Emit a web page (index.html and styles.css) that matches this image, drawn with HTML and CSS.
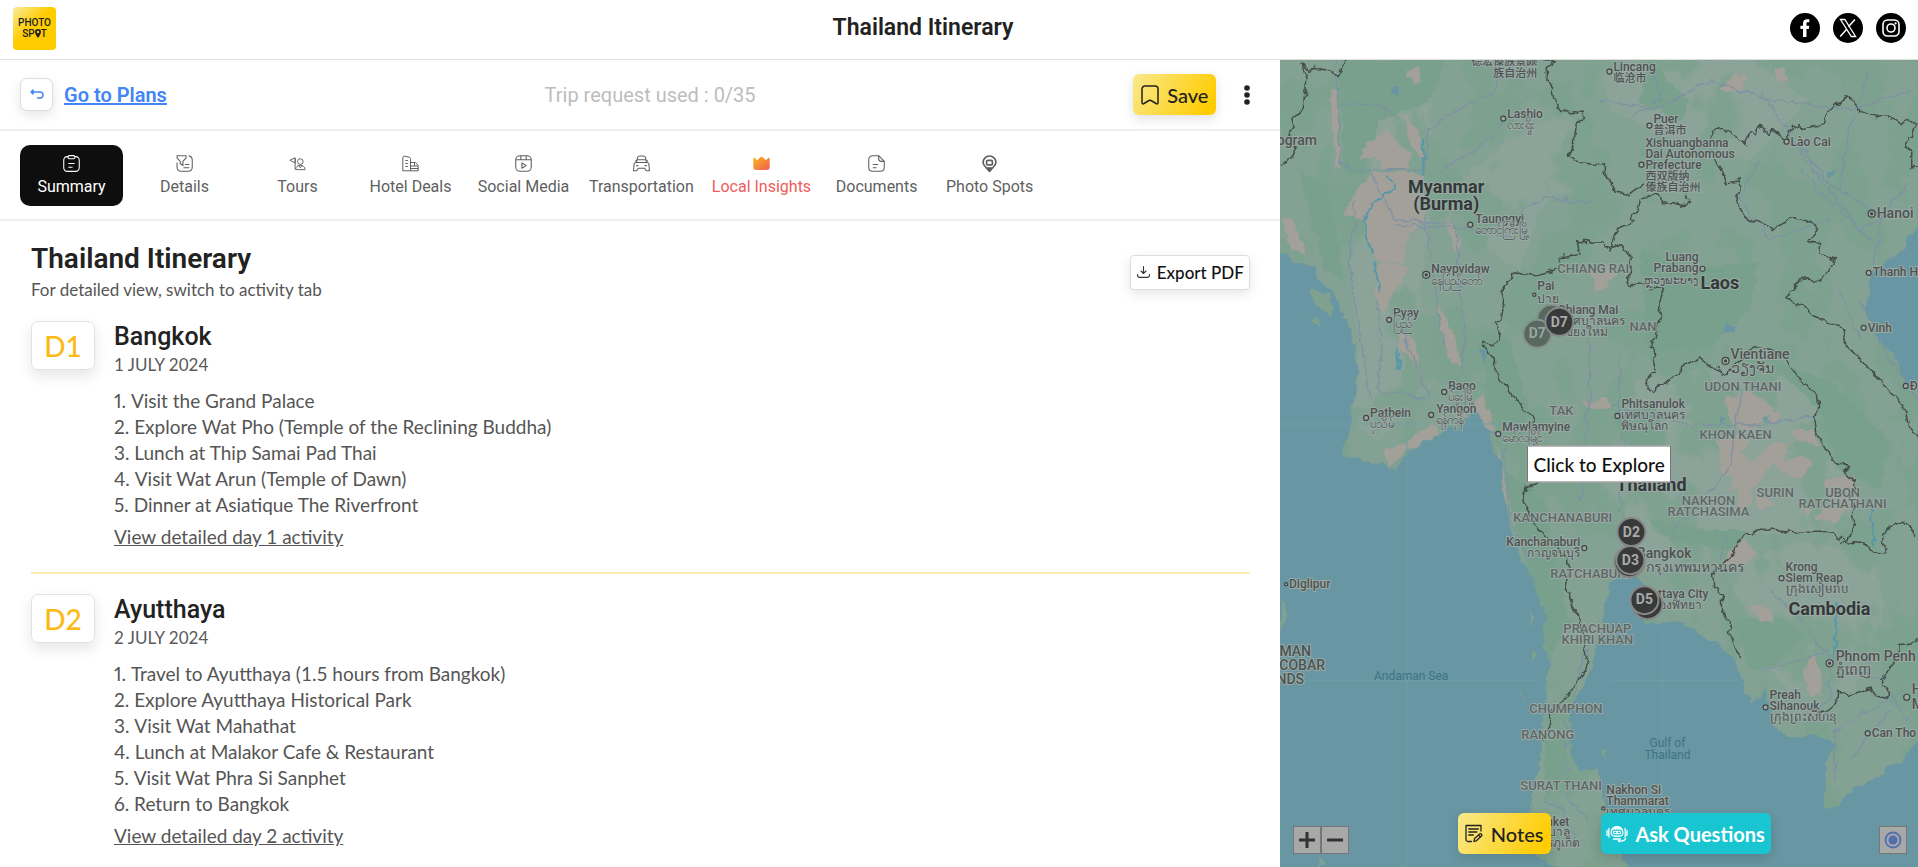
FILE: index.html
```html
<!DOCTYPE html>
<html lang="en">
<head>
<meta charset="utf-8">
<title>Thailand Itinerary</title>
<link rel="stylesheet" href="styles.css">
</head>
<body>
<div class="app">
  <header class="header">
    <a class="logo" href="#" aria-label="Photo Spot">
      <span>PHOTO</span>
      <span class="logo-line">SP<svg width="6" height="9" viewBox="0 0 6 9"><path d="M3 0a3 3 0 0 0-3 3c0 2 3 6 3 6s3-4 3-6a3 3 0 0 0-3-3z" fill="#222"/><circle cx="3" cy="3" r="1.2" fill="#fc0"/></svg>T</span>
    </a>
    <h1 class="page-title">Thailand Itinerary</h1>
    <nav class="socials" aria-label="Social links">
      <a href="#" aria-label="Facebook"><svg viewBox="0 0 30 30"><circle cx="15" cy="15" r="15"/><path d="M13 24v-8h-2.600v-3.200H13v-2.300C13 7.600 14.600 6.300 17 6.300h2.300v3h-1.500c-1 0-1.300.5-1.300 1.300v2.200h2.700l-.4 3.200h-2.300v8z" fill="#fff"/></svg></a>
      <a href="#" aria-label="X"><svg viewBox="0 0 30 30"><circle cx="15" cy="15" r="15"/><path d="M7.500 6.500h4.300l10.800 17h-4.300z" fill="none" stroke="#fff" stroke-width="1.300"/><path d="M22 6.500l-6.600 7.300M13.700 16.300L7.200 23.500" stroke="#fff" stroke-width="1.500"/></svg></a>
      <a href="#" aria-label="Instagram"><svg viewBox="0 0 30 30"><circle cx="15" cy="15" r="15"/><g fill="none" stroke="#fff" stroke-width="1.600"><rect x="7" y="7" width="16" height="16" rx="4.500"/><circle cx="15" cy="15" r="4"/></g><circle cx="19.600" cy="10.400" r="1.100" fill="#fff"/></svg></a>
    </nav>
  </header>

  <main class="main">
    <section class="plan">
      <div class="toolbar">
        <div class="back">
          <button class="back-button" aria-label="Back"><svg width="14" height="11" viewBox="0 0 14 11" fill="none" stroke="#4285f4" stroke-width="1.400" stroke-linecap="round" stroke-linejoin="round"><path d="M1.500 3H10a3 3 0 0 1 0 6H7.500"/><path d="M3 1L1 3l2 2z" fill="#4285f4"/></svg></button>
          <a class="back-link" href="#">Go to Plans</a>
        </div>
        <p class="quota">Trip request used : 0/35</p>
        <div class="actions">
          <button class="gold-button save"><svg width="18" height="20" viewBox="0 0 18 20" fill="none" stroke="#222" stroke-width="1.500" stroke-linejoin="round"><path d="M1 17.500V4a3 3 0 0 1 3-3h10a3 3 0 0 1 3 3v13.500c0 1.500-1 1.800-2 1l-5-3c-.7-.4-1.300-.4-2 0l-5 3c-1 .8-2 .5-2-1z"/></svg>Save</button>
          <button class="more" aria-label="More options"><svg width="6" height="20" viewBox="0 0 6 20" fill="#222"><circle cx="3" cy="3" r="2.800"/><circle cx="3" cy="10" r="2.800"/><circle cx="3" cy="17" r="2.800"/></svg></button>
        </div>
      </div>

      <nav class="tabs" aria-label="Plan sections">
        <a class="tab active" href="#"><svg viewBox="0 0 16 16"><path d="M5 1.500H4A3.300 3.300 0 0 0 .7 5v7A3.300 3.300 0 0 0 4 15.400h8a3.300 3.300 0 0 0 3.300-3.300V5A3.300 3.300 0 0 0 12 1.500h-1"/><rect x="4.700" y=".6" width="6.600" height="3" rx="1.500"/><path d="M5 8h6M5 11.500h4"/></svg>Summary</a>
        <a class="tab" href="#"><svg viewBox="0 0 16 16"><path d="M1 .7h8.500v2L6.500 6v4L4 8V6L1 2.700zM12 .8c2 .3 3.300 1.700 3.300 4v6.500c0 2.600-1.400 4-4 4H5c-2.600 0-4-1.400-4-4V7M8.500 9h4M7 12h5.500"/></svg>Details</a>
        <a class="tab" href="#"><svg viewBox="0 0 18 16"><path d="M6.500 2L1 4.500l5.500 3zM6.500 2v12"/><circle cx="12" cy="6" r="3"/><path d="M7 14.500c0-6 10-6 10 0zM10 10l2 2.500 2-2.500"/></svg>Tours</a>
        <a class="tab" href="#"><svg viewBox="0 0 17 16"><path d="M8.500 15.300H.8V2.500C.8 1 1.700.5 3 .7l4 1C8.200 2 8.500 2.700 8.500 4zM3.300 5h2.500M3.300 8h2.500M3.300 11h2.500M8.500 7h5l2.700 3v5.300H8.500M9 10.500h7M9 13h7M12.500 7v3.500"/></svg>Hotel Deals</a>
        <a class="tab" href="#"><svg viewBox="0 0 16 16"><rect x=".7" y=".7" width="14.600" height="14.600" rx="4"/><path d="M.7 4.500h14.600M5.500.7v3.800M10.500.7v3.800M6.500 7.500v5l4-2.500z"/></svg>Social Media</a>
        <a class="tab" href="#"><svg viewBox="0 0 16 16"><path d="M3.300 7l.9-4.500C4.500 1.300 5.200 1 6.500 1h3c1.300 0 2 .3 2.300 1.500l.9 4.500M2 5.500h1.500M12.500 5.500H14M4 4.500h8M2.500 7h11c1 0 1.500 1 1.500 2l.5 5.800h-3L11 12.500H5l-1.500 2.300h-3L1 9c0-1 .5-2 1.500-2zM3 10h2M11 10h2"/></svg>Transportation</a>
        <a class="tab insight" href="#"><svg viewBox="0 0 16 16"><defs><linearGradient id="crown" x1="0" y1="0" x2="1" y2="1"><stop offset="0" stop-color="#fdb913"/><stop offset="1" stop-color="#ef5b5b"/></linearGradient></defs><path d="M.3 3.500c0-1 1-1.200 1.600-.5L4 5l2.500-2.700c1-1 2-1 3 0L12 5l2.100-2c.6-.7 1.600-.5 1.600.5V11c0 2-1 3-3 3H3.300c-2 0-3-1-3-3z" fill="url(#crown)" stroke="none"/></svg>Local Insights</a>
        <a class="tab" href="#"><svg viewBox="0 0 16 16"><path d="M10 .7H4.500C2 .7.700 2 .7 4.500v7c0 2.500 1.300 3.800 3.800 3.800h7c2.500 0 3.800-1.300 3.800-3.800V6zM10 .7V3.500C10 5.200 10.800 6 12.500 6h2.800M4.500 9h5M4.500 12h3.500"/></svg>Documents</a>
        <a class="tab" href="#"><svg viewBox="0 0 16 16"><path d="M8 1a6 6 0 0 0-6 6c0 3 3.500 5 6 8.500 2.500-3.500 6-5.500 6-8.500a6 6 0 0 0-6-6z" stroke-width="1.500"/><path d="M5 12h6l-3 3.500z" fill="#5f5f5f"/><rect x="5.300" y="5" width="5.400" height="4.300" rx="1" stroke-width="1.600"/></svg>Photo Spots</a>
      </nav>

      <div class="content">
        <div class="content-head">
          <div>
            <h2 class="content-title">Thailand Itinerary</h2>
            <p class="hint">For detailed view, switch to activity tab</p>
          </div>
          <button class="export"><svg width="13" height="12" viewBox="0 0 13 12" fill="none" stroke="#333" stroke-width="1.100" stroke-linecap="round" stroke-linejoin="round"><path d="M6.500.6v6.600M4 5l2.500 2.500L9 5M.6 8.500v1c0 1.200.8 1.900 2 1.900h7.800c1.200 0 2-.7 2-1.900v-1"/></svg>Export PDF</button>
        </div>

        <article class="day">
          <div class="day-badge">D1</div>
          <div class="day-body">
            <h3 class="day-city">Bangkok</h3>
            <p class="day-date">1 JULY 2024</p>
            <ol class="day-list">
              <li>Visit the Grand Palace</li>
              <li>Explore Wat Pho (Temple of the Reclining Buddha)</li>
              <li>Lunch at Thip Samai Pad Thai</li>
              <li>Visit Wat Arun (Temple of Dawn)</li>
              <li>Dinner at Asiatique The Riverfront</li>
            </ol>
            <a class="day-link" href="#">View detailed day 1 activity</a>
          </div>
        </article>
        <article class="day">
          <div class="day-badge">D2</div>
          <div class="day-body">
            <h3 class="day-city">Ayutthaya</h3>
            <p class="day-date">2 JULY 2024</p>
            <ol class="day-list">
              <li>Travel to Ayutthaya (1.5 hours from Bangkok)</li>
              <li>Explore Ayutthaya Historical Park</li>
              <li>Visit Wat Mahathat</li>
              <li>Lunch at Malakor Cafe &amp; Restaurant</li>
              <li>Visit Wat Phra Si Sanphet</li>
              <li>Return to Bangkok</li>
            </ol>
            <a class="day-link" href="#">View detailed day 2 activity</a>
          </div>
        </article>
      </div>
    </section>

    <section class="map" aria-label="Map of Thailand">
      <svg class="map-canvas" viewBox="1281 60 637 807" preserveAspectRatio="xMidYMid slice">
        <defs>
          <filter id="rough" color-interpolation-filters="sRGB" filterUnits="userSpaceOnUse" x="1260" y="40" width="680" height="850"><feTurbulence type="fractalNoise" baseFrequency=".09" numOctaves="3" seed="4"/><feDisplacementMap in="SourceGraphic" scale="9" xChannelSelector="R" yChannelSelector="G"/></filter>
          <filter id="forest" color-interpolation-filters="sRGB" filterUnits="userSpaceOnUse" x="1281" y="60" width="637" height="807"><feTurbulence type="fractalNoise" baseFrequency=".018 .013" numOctaves="4" seed="11"/><feColorMatrix values="0 0 0 0 .47  0 0 0 0 .63  0 0 0 0 .55  14 0 0 0 -7"/><feComposite in2="SourceGraphic" operator="in"/></filter>
        </defs>
        <rect x="1281" y="60" width="637" height="807" fill="#84a294"/>
        <g filter="url(#rough)">
          <g fill="#8ba398">
            <path d="M1610 400L1640 380 1690 370 1730 365 1770 370 1815 390 1820 440 1850 460 1860 500 1850 530 1740 535 1720 560 1650 570 1620 540 1600 480z"/>
            <path d="M1375 60h60l-5 60 10 50-20 120 20 90-60 60-30-20 10-70-10-80 20-60z"/>
            <path d="M1460 180l50-40 60-30 30 60-60 40-20 60-30-20z"/>
            <path d="M1745 560l60-20 70 20 10 50-30 80-60 10-30-40-40-40z"/>
            <path d="M1600 60h150l60 40-60 60-80-20-60-30z"/>
          </g>
          <rect x="1281" y="60" width="637" height="807" filter="url(#forest)" opacity=".6"/>
          <g fill="#78a08d">
            <path d="M1340 62h105l-15 40-50 20-15 50-20 5z"/>
            <path d="M1300 170l30 20 15 90-20-10z"/>
            <path d="M1480 330l30 10 20 70-10 40-30-40z"/>
            <path d="M1505 470l40 30 10 60 15 60-20 40-10-60-20-60z"/>
            <path d="M1650 62l40 40-10 20-40-20z"/>
            <path d="M1640 250l60 20 60-10-10 50-40 40-60 0z"/>
            <path d="M1770 360l60 20 60 60-10 50-40-20-20-60z"/>
            <path d="M1735 620l40-5 30 20-30 30-25 5z"/>
            <path d="M1650 520l60 10 40 0-20 20-60-10z"/>
            <path d="M1545 740l20-10 0 50-20 20z"/>
            <path d="M1615 420l40-20 10 40-30 20z"/>
          </g>
          <g fill="#a39f99">
            <path d="M1332 90l6 3 0 40 4 35-6-4-4-50z"/>
            <path d="M1408 72l12-4 1 14-8 2z"/>
            <path d="M1404 115l14 13 8 36-14-16z"/>
            <path d="M1368 143l20-13 12 15 14 10-6 16-22-2-10-12-14 2z"/>
            <path d="M1358 190l20-18 28 0 20 4 0 44-16 14-6 30-28-4-12-40-20-4z"/>
            <path d="M1380 262l28 4-8 18-16 30-8-20z"/>
            <path d="M1283 220l10 0 14 34-14-4z"/>
            <path d="M1437 300l10 20 12 24 4 22-12-2-8-34z"/>
            <path d="M1450 215l12 30-5 8-8-20z"/>
            <path d="M1400 330l14 10 4 18 4 26-6-20-16-16z"/>
            <path d="M1385 450l20-8 30-20 5 12-30 16-20 16z"/>
            <path d="M1440 415l30-10 14-10 12 36-14 0-16-14z"/>
            <path d="M1498 445l6 20 4 40-6-14z"/>
            <path d="M1727 400l18-10 20 10 16 15-4 8-14-6-8 12-14 2-14-14z"/>
            <path d="M1716 440l24-5 10 8-10 8 14 10 20-20 16 4-6 14 20-4 8 10-10 14-20-4-8-12-25 30-20-4 8-12-14-4z"/>
            <path d="M1790 430l25 0 5 15-20-4zM1825 480l30-5 0 24-20 24-20-4 12-14zM1740 490l14 4-8 18-10-4zM1756 500l12-4 4 10-12 4zM1800 505l14 4-8 10z"/>
            <path d="M1730 550l14-10 14 14-20 14-14-4zM1750 604l20 4 5 14-14-2z"/>
            <path d="M1805 670l10-18 5 22 5 10-12 14-6-8z"/>
            <path d="M1720 90l14-14 12 0-2 12-16 8zM1776 70l8-4 5 16-12 0z"/>
            <path d="M1590 265l18 0 10 10-20 18zM1585 402l24-4 0 10-20 0z"/>
          </g>
          <g fill="none" stroke="#7c90a4" stroke-width="1.200">
            <path d="M1336 60l4 100 10 10 50 0 25 0 5-40 20-15 40-20 10-15 0-20"/>
            <path d="M1440 172l40-24 30-30M1370 170l26 50 60 5 10 120-10 60 40 30M1356 200l-5 70 20 130"/>
            <path d="M1378 300l5 50-5 40 50 10M1400 320l30 80M1425 215l20 130M1515 218l30-20 50 5"/>
            <path d="M1340 105l40 0 20 14M1515 240l-30-10-90-5"/>
            <path d="M1600 100l60 10 50-30 60 20 80 10 60-20M1760 90l20 30 40 60 50 60M1650 60l10 40-30 20M1870 70l-20 60-10 60"/>
            <path d="M1800 145l30 40 50 30 30-30M1800 170l60 60 40-20M1885 215l-10 40-5 40M1760 160l-20 40 30 40 60-20"/>
            <path d="M1620 350l0 60 5 40-5 60 20 30M1740 385l0 20-10 60-30 40-30 30M1610 405l80 20 70 0 60-10"/>
            <path d="M1860 300l30 60 28 40M1840 290l20 50M1590 340l0 60-10 100"/>
            <path d="M1505 440l5 80 20 40M1570 730l10-60 20-50M1545 800l20 10 10 30M1565 720l4 80 20 20"/>
            <path d="M1770 590l40 40 20 30 0 40-30 20M1830 660l50 20 30 40M1760 670l40-10 30-10M1835 780l0-50 70-40M1850 760l40-50M1720 560l10-30"/>
          </g>
          <g fill="none" stroke="#5598aa" stroke-width="2">
            <path d="M1387 175l8 14-22 15-8 18 8 32M1424 140l0 35M1398 348l2 24M1870 500l4 45M1838 600l-4 60M1375 262l6 30"/>
          </g>
          <g fill="#6896a3">
            <path d="M1270 250l17 2 5 11 11 2 14 2 1 13 9 7 8 6 17 40 6 30 0 24-6 26-5 27-4 15 17 5 17 5 20 3 13-15 13-11 17-7 7-5 15-3 13-20 5 13 12 12 0 10 5 15 6 6 1 30 4 24 10 36 12 17 10 27 7 20-4 23 9 24-5 20 1 23-6 17 1 26-8 34-3 20-5 13 0 20 13 20 37 20 10 20-317 10z"/>
            <path d="M1635 875l-10-15-20-50 0-20-7-23-18 3-8-16-4-17 2-27 12-20 11-26 7-24 5-30 5-26 12-9 16 1 8 8-2 40 36-3 20 13 20 10 10 7 7 16 7 14 5 20 11-2 4-12 5 17 5 20 13 13 27-3 23 10-10 10-2 30-1 17 0 6 13-1 17-19 30-13 3-8 13-2 4-7 25-25v150z"/>
            <path d="M1930 215l-24 25-3 12-15 8-17 17-1 13-5 20 10 23 23 27 5 17 27 24z"/>
            <path d="M1391 91l10-4-2 10-8-2zM1480 348l8 4-4 12zM1726 320l10 12-14 2zM1825 168l10 3-4 8zM1720 415l6 6-6 2zM1762 416l8-2-4 8z"/>
          </g>
          <g fill="#7fa290">
            <path d="M1309 290l22 5 4 20-12-4zM1311 318l10 0-2 8zM1529 610l6 6-4 12zM1534 650l6 4-8 8zM1520 690l8 12-6-6zM1281 600l6 10-2 20-4-2zM1603 746l5 3-4 10zM1710 635l6 6zM1320 855l8 8-8 2z"/>
          </g>
          <g fill="none" stroke="#444d4b" stroke-width="1.500" stroke-linejoin="round">
            <path d="M1345 60l-2 12-3 3-10-5-12-2-8 3-7-8 4 12-1 15-2 20-7 6-4 1 2 11-4 7 6 13-4 10-5 2-5 7"/>
            <path d="M1540 60l17 1-10 7 0 9 6 10 4 20 13 5 15 1 0 7-8 3-2 20-7 14 12 5 20 2 5 0 0 10 8 9 0 8 18 3 14-10"/>
            <path d="M1711 138l7-11 13 6 14 11 5-11 7 2 1-8 7 1 3 8 4-8 15 14 3-14 9-3 6 5 7-4 13-3 4-13 10-7 10-6 13 15 14 6 10-1 16 7 5-4 10 5-3 10-7 2-1 10 6 6 0 14 7 0"/>
            <path d="M1712 150l16 32 14-2-6 22 9 15 17 8 14 5 5-8 14-5 18 6 5 8-10 11 13 2-1 9 15 6-5 13-10 9-13-2-12 2 0 10-8 7 15 9 20 13 20 7 3 3-1 12 11 11 14 15 10 12 16 17 12 13 3 18 7 8 6-6"/>
            <path d="M1658 193l3 9 14 1 11 3 4-5-5-8M1658 193l-18 7-2 10-8 8 6 3-18 9-5 13-1 8-8-9-26 1 3 12-21 2 0 12-24 6-21-3-2 7-8 5 0 20-3 15-4 5 3 15-11 5-7-2 7 12 6 5 1 15 10 13 16 22 12 12-2 12 4 10 2 20 10 7M1611 250l10-5 11 12-3 20 3 9 14-1 18 5-6 20 5 6-6 11-1 11-5 9 5 8-2 17-7 8 0 7 7 4 17-11 11-12 7-6 10-5 10 9 12 2 2 8 26-23 3-4 14 1 13 5 5 0 8 13 14 18 12 9 1 12-3 10 2 16 8 17 7 10 15 5-2 8 10 7 0 10-5 7 4 23-4 13-4 7-9 5"/>
            <path d="M1843 535l-5 3-5-6-15-1-17 2-13-2-15-2-25 5-10 8-2 10-10 10-12 12 0 12 8 8 0 15 10 18-2 8 7 14 2 10M1843 535l8 7 17 3 7 7 9 1 3-6-6-5 0-7 10-7 12-6 15 13"/>
            <path d="M1918 638l-6 6-14 0 1 14-19 24 8 6-1 10-12-4-5-6-20 7-12-2-1 10-9 8-12 0"/>
            <path d="M1542 483l-17 7 0 13 5 10 10 17 17 13 11 17 2 17-4 12 6 17 8 8 6 40 5 7-9 12-12 22-18 16-7 28"/>
          </g>
        </g>
        <path d="M1281 424h260M1408 440v427M1281 680h260M1663 630v210M1610 680h130" stroke="#729fa4" fill="none"/>

        <g class="dots">
          <circle cx="1504" cy="119" r="2.500"/><circle cx="1471" cy="225" r="2.500"/><circle cx="1610" cy="72" r="2.500"/><circle cx="1650" cy="126" r="2.500"/><circle cx="1642" cy="165" r="2.500"/><circle cx="1787" cy="142" r="2.500"/><circle cx="1703" cy="269" r="2.500"/><circle cx="1869" cy="273" r="2.500"/><circle cx="1390" cy="320" r="2.500"/><circle cx="1445" cy="392" r="2.500"/><circle cx="1432" cy="415" r="2.500"/><circle cx="1367" cy="418" r="2.500"/><circle cx="1499" cy="434" r="2.500"/><circle cx="1585" cy="548" r="2.500"/><circle cx="1535" cy="295" r="1.600"/><circle cx="1618" cy="416" r="2.500"/><circle cx="1864" cy="328" r="2.500"/><circle cx="1906" cy="386" r="2.500"/><circle cx="1782" cy="578" r="2.500"/><circle cx="1766" cy="707" r="2.500"/><circle cx="1868" cy="733" r="2.500"/><circle cx="1907" cy="697" r="3"/><circle cx="1604" cy="808" r="1.600"/><circle cx="1287" cy="584" r="1.600"/>
          <g><circle cx="1427" cy="275" r="3.500"/><circle cx="1872" cy="214" r="3.500"/><circle cx="1726" cy="361" r="3.500"/><circle cx="1830" cy="663" r="3.500"/></g>
          <g fill="#333"><circle cx="1427" cy="275" r="1"/><circle cx="1872" cy="214" r="1"/><circle cx="1726" cy="361" r="1"/><circle cx="1830" cy="663" r="1"/></g>
        </g>
        <g class="labels">
          <g class="end han"><text x="1538" y="65">德宏傣族景颇</text><text x="1538" y="77">族自治州</text></g>
          <text x="1508" y="118">Lashio</text><text x="1508" y="129">လားရှိုး</text>
          <text x="1476" y="223">Taunggyi</text><text x="1476" y="234">တောင်ကြီးမြို့</text>
          <text x="1432" y="273">Naypyidaw</text><text x="1432" y="285">နေပြည်တော်</text>
          <text x="1538" y="290">Pai</text><text x="1538" y="303">ปาย</text>
          <text x="1614" y="71">Lincang</text><text class="han" x="1614" y="82">临沧市</text>
          <text x="1654" y="123">Puer</text><text class="han" x="1654" y="134">普洱市</text>
          <text x="1646" y="147">Xishuangbanna</text><text x="1646" y="158">Dai Autonomous</text><text x="1646" y="169">Prefecture</text><g class="han"><text x="1646" y="180">西双版纳</text><text x="1646" y="191">傣族自治州</text></g>
          <text x="1791" y="146">Lào Cai</text><text x="1873" y="276">Thanh Hóa</text>
          <g class="end"><text x="1699" y="261">Luang</text><text x="1699" y="272">Prabang</text><text class="han" x="1699" y="284">ຫຼວງພະບາງ</text></g>
          <text x="1394" y="317">Pyay</text><text x="1394" y="328">ပြည်</text>
          <text x="1449" y="390">Bago</text><text x="1449" y="401">ပဲခူးမြို့</text>
          <text x="1437" y="413">Yangon</text><text x="1437" y="424">ရန်ကုန်</text>
          <text x="1371" y="417">Pathein</text><text x="1371" y="428">ပုသိမ်</text>
          <text x="1503" y="431">Mawlamyine</text><text x="1503" y="442">မော်လမြိုင်</text>
          <g class="end"><text x="1581" y="546">Kanchanaburi</text><text x="1581" y="557">กาญจนบุรี</text><text x="1619" y="314">Chiang Mai</text><text x="1626" y="325">เทศบาลนคร</text><text x="1609" y="336">เชียงใหม่</text></g>
          <text x="1622" y="408">Phitsanulok</text><text x="1622" y="419">เทศบาลนคร</text><text x="1622" y="430">พิษณุโลก</text>
          <text x="1868" y="332">Vinh</text><text x="1910" y="390">Đà Nẵng</text>
          <text x="1786" y="571">Krong</text><text x="1786" y="582">Siem Reap</text><text x="1786" y="593">ក្រុងសៀមរាប</text>
          <g class="end"><text x="1709" y="598">Pattaya City</text><text x="1703" y="609">เมืองพัทยา</text></g>
          <text x="1770" y="699">Preah</text><text x="1770" y="710">Sihanouk</text><text x="1770" y="721">ក្រុងព្រះសីហនុ</text>
          <text x="1872" y="737">Can Tho</text>
          <text x="1607" y="794">Nakhon Si</text><text x="1607" y="805">Thammarat</text><text x="1607" y="816">เทศบาลนคร</text>
          <g class="end"><text x="1570" y="826">Phuket</text><text x="1571" y="836">เทศบาล</text><text x="1581" y="847">นครภูเก็ต</text></g>
          <text x="1290" y="588">Diglipur</text>
          <g class="region">
            <text x="1558" y="273">CHIANG RAI</text><text x="1550" y="415">TAK</text><text x="1514" y="522">KANCHANABURI</text><text x="1551" y="578">RATCHABURI</text><text x="1630" y="331">NAN</text><text x="1705" y="391">UDON THANI</text><text x="1700" y="439">KHON KAEN</text><text x="1757" y="497">SURIN</text>
            <g class="middle"><text x="1709" y="505">NAKHON</text><text x="1709" y="516">RATCHASIMA</text><text x="1843" y="497">UBON</text><text x="1843" y="508">RATCHATHANI</text><text x="1598" y="633">PRACHUAP</text><text x="1598" y="644">KHIRI KHAN</text></g>
            <text x="1530" y="713">CHUMPHON</text><text x="1522" y="739">RANONG</text><text x="1521" y="790">SURAT THANI</text>
          </g>
          <g class="city">
            <text x="1877" y="218">Hanoi</text><text x="1731" y="359">Vientiane</text><text x="1731" y="373">ວຽງຈັນ</text><text x="1836" y="661">Phnom Penh</text><text x="1836" y="675">ភ្នំពេញ</text><text x="1912" y="694">Ho Chi</text><text x="1912" y="709">Minh City</text>
            <g class="end"><text x="1318" y="145">Chattogram</text><text x="1692" y="558">Bangkok</text><text x="1745" y="572">กรุงเทพมหานคร</text><text x="1312" y="656">ANDAMAN</text><text x="1326" y="670">AND NICOBAR</text><text x="1305" y="684">ISLANDS</text></g>
          </g>
          <g class="country">
            <text class="middle" x="1447" y="193">Myanmar</text><text class="middle" x="1447" y="210">(Burma)</text><text x="1701" y="289">Laos</text><text class="middle" x="1652" y="491">Thailand</text><text x="1789" y="615">Cambodia</text>
          </g>
        </g>
        <g class="sea"><text x="1412" y="680">Andaman Sea</text><text x="1668" y="747">Gulf of</text><text x="1668" y="759">Thailand</text></g>

        <g class="pins">
          <g opacity=".55"><circle cx="1552" cy="319" r="14"/><circle cx="1538" cy="334" r="14"/><text x="1538" y="338">D7</text></g>
          <circle cx="1560" cy="322" r="14"/><text x="1560" y="327">D7</text>
          <circle cx="1632" cy="532" r="14"/><text x="1632" y="537">D2</text>
          <circle cx="1630" cy="562" r="15"/><circle cx="1631" cy="560" r="14"/><text x="1631" y="565">D3</text>
          <circle cx="1648" cy="604" r="15"/><circle cx="1645" cy="600" r="14"/><text x="1645" y="604">D5</text>
        </g>
      </svg>

      <button class="explore">Click to Explore</button>

      <div class="map-bar">
        <div class="zoom">
          <button class="map-control" aria-label="Zoom in"><svg width="18" height="18" viewBox="0 0 18 18" stroke="#333" stroke-width="3"><path d="M9 1v16M1 9h16"/></svg></button>
          <button class="map-control" aria-label="Zoom out"><svg width="18" height="18" viewBox="0 0 18 18" stroke="#333" stroke-width="3"><path d="M1 9h16"/></svg></button>
        </div>
        <div class="map-actions">
          <button class="gold-button notes"><svg width="18" height="19" viewBox="0 0 18 19" fill="none" stroke="#222" stroke-width="1.300" stroke-linecap="round" stroke-linejoin="round"><path d="M6.500 17.500H3a2 2 0 0 1-2-2V1.500h15V7M3.800 5h9.500M3.800 8h8M3.800 11h4.500"/><path d="M9 17.500l.6-3 5-4.500c1.400-1 3 .8 1.800 2l-5 4.800zM13.500 11l2 2"/></svg>Notes</button>
          <button class="ask"><svg width="22" height="18" viewBox="0 0 22 18" fill="none" stroke="#fff" stroke-width="1.300" stroke-linecap="round"><path d="M4.500 7.500C5 3 7.500 1 11 1s6 2 6.500 6.500c0 3-2 4.500-6.500 4.500s-6.500-1.500-6.500-4.500z" fill="#fff" stroke="none"/><rect x="6.200" y="5.200" width="9.600" height="4.600" rx="2.300" stroke="#19c5d1" stroke-width="1.200"/><path d="M8.700 7.500h1M12.300 7.500h1" stroke="#19c5d1" stroke-width="1.500"/><path d="M1 5.500v5M21 5.500v5M3 3.500C2.600 6 2.600 9 3 12M19 3.500c.4 2.500.4 6 0 8.500M19.500 13.500c-.5 2-2.500 2.500-5 2.500M7.500 14h7"/><circle cx="13" cy="16" r="1.300" fill="#fff" stroke="none"/></svg>Ask Questions</button>
        </div>
        <button class="map-control" aria-label="My location"><svg width="18" height="18" viewBox="0 0 18 18"><circle cx="9" cy="9" r="7.500" fill="none" stroke="#4f6fae" stroke-width="1.800"/><circle cx="9" cy="9" r="4.500" fill="#4f6fae"/></svg></button>
      </div>
    </section>
  </main>
</div>
</body>
</html>
```

FILE: styles.css
```css
* { box-sizing: border-box; }
body { margin: 0; font-family: Lato, "Noto Sans", sans-serif; color: #222; background: #fff; }
h1, h2, h3, p, ol { margin: 0; padding: 0; }
button { font: inherit; color: inherit; cursor: pointer; border: 0; padding: 0; display: inline-flex; align-items: center; justify-content: center; }
svg { display: block; flex: none; }

.app { height: 100vh; display: flex; flex-direction: column; }
.header { flex: none; height: 60px; padding: 0 12px 3px 13px; display: flex; align-items: center; justify-content: space-between; border-bottom: 1px solid #ddd; }
.logo { width: 43px; height: 43px; border-radius: 4px; background: linear-gradient(135deg, #f9e98c 5%, #fc0 45%); color: #222; font: 500 10px/11px Roboto, sans-serif; text-decoration: none; display: flex; flex-direction: column; align-items: center; justify-content: center; }
.logo-line { display: flex; align-items: center; }
.page-title { font: 600 23px/30px Roboto, sans-serif; }
.socials { display: flex; gap: 13px; }
.socials svg { width: 30px; height: 30px; }

.main { flex: 1; min-height: 0; display: flex; }
.plan { flex: 1; min-width: 0; overflow: hidden; }
.toolbar { height: 71px; padding: 0 30px 0 20px; border-bottom: 2px solid #eee; display: flex; align-items: center; justify-content: space-between; }
.back { display: flex; align-items: center; gap: 11px; }
.back-button { width: 33px; height: 33px; background: #fff; border: 1px solid #ddd; border-radius: 7px; box-shadow: 0 4px 12px rgba(0, 0, 0, .1); }
.back-link { font: 600 20px/24px Roboto, sans-serif; color: #4285f4; }
.quota { font: 400 20px/24px Roboto, sans-serif; color: #bdbdbd; }
.actions { display: flex; align-items: center; gap: 28px; }
.gold-button { height: 41px; border-radius: 6px; gap: 8px; background: linear-gradient(120deg, #f9e98c, #fc0 90%); font-size: 20px; font-weight: 500; box-shadow: 0 4px 12px rgba(0, 0, 0, .12); }
.save { width: 83px; }
.more { background: none; }

.tabs { height: 90px; padding: 14px 20px 0; display: flex; align-items: flex-start; gap: 10px; border-bottom: 2px solid #f0f0f0; }
.tab { min-width: 103px; height: 61px; padding: 0 4px; border-radius: 10px; display: flex; flex-direction: column; align-items: center; justify-content: center; gap: 5px; font: 400 16px/20px Roboto, sans-serif; color: #5f5f5f; text-decoration: none; white-space: nowrap; }
.tab svg { width: 17px; height: 17px; fill: none; stroke: currentColor; stroke-width: 1; stroke-linejoin: round; }
.tab.active { background: #0e0e0e; color: #fff; }
.tab.insight { color: #ef5b5b; }

.content { padding: 20px 30px 20px 31px; }
.content-head { display: flex; align-items: center; justify-content: space-between; margin-bottom: 18px; }
.content-title { font: 600 28px/36px Roboto, sans-serif; }
.hint { font-size: 17px; line-height: 26px; color: #555; }
.export { width: 120px; height: 35px; gap: 7px; background: #fff; border: 1px solid #ddd; border-radius: 4px; font-size: 17px; font-weight: 500; color: #111; box-shadow: 0 4px 12px rgba(0, 0, 0, .1); }
.day { display: flex; gap: 19px; }
.day + .day { margin-top: 21px; padding-top: 20px; border-top: 2px solid #fdebb0; }
.day-badge { flex: none; width: 64px; height: 49px; border: 1px solid #e2e2e2; border-radius: 7px; display: flex; align-items: center; justify-content: center; font-size: 28px; font-weight: 500; color: #fdb913; box-shadow: 0 6px 14px rgba(0, 0, 0, .1); }
.day-body { display: flex; flex-direction: column; align-items: flex-start; }
.day-city { font: 500 25px/32px Roboto, sans-serif; }
.day-date { font-size: 17px; line-height: 24px; color: #5a5a5a; }
.day-list { margin: 11px 0 5px; list-style-position: inside; font-size: 19px; line-height: 26px; color: #555; }
.day-list li::marker { font-variant-numeric: proportional-nums; }
.day-link { font-size: 19px; line-height: 28px; color: #555; }

.map { position: relative; flex: none; width: 33.25%; overflow: hidden; background: #6896a3; }
.map-canvas { width: 100%; height: 100%; }
.labels { font: 500 12px Roboto, "Noto Sans CJK SC", "Noto Sans", sans-serif; fill: #4d5352; stroke: #9aaaa5; stroke-width: 2px; stroke-linejoin: round; paint-order: stroke; }
.han { font-size: 11px; }
.end { text-anchor: end; }
.middle { text-anchor: middle; }
.region { font-size: 13px; fill: #5f6765; }
.city { font-size: 14px; }
.country { font-size: 18px; font-weight: 700; fill: #333938; }
.sea { font: 400 12px Roboto, sans-serif; fill: #3d7580; text-anchor: middle; }
.dots { fill: #9aa9a3; stroke: #444; stroke-width: 1.2px; }
.pins { font: 700 14px Roboto, sans-serif; text-anchor: middle; fill: #aaa; }
.pins circle { fill: #383a3a; stroke: #858886; stroke-width: 2px; }
.explore { position: absolute; left: 50%; top: 50%; transform: translate(-50%, -50%); width: 144px; height: 37px; background: #fff; border: 1px solid #777; font-size: 19px; font-weight: 500; color: #111; white-space: nowrap; }
.map-bar { position: absolute; left: 13px; right: 11px; bottom: 13px; display: flex; align-items: flex-end; justify-content: space-between; }
.zoom { display: flex; }
.map-control { width: 28px; height: 28px; background: #a8a8a8; border: 1px solid #777; }
.map-actions { display: flex; gap: 50px; }
.notes { width: 93px; }
.ask { width: 170px; height: 41px; gap: 7px; border-radius: 6px; background: #19c5d1; color: #fff; font-size: 20px; font-weight: 700; box-shadow: 0 4px 12px rgba(0, 0, 0, .15); white-space: nowrap; }
```
